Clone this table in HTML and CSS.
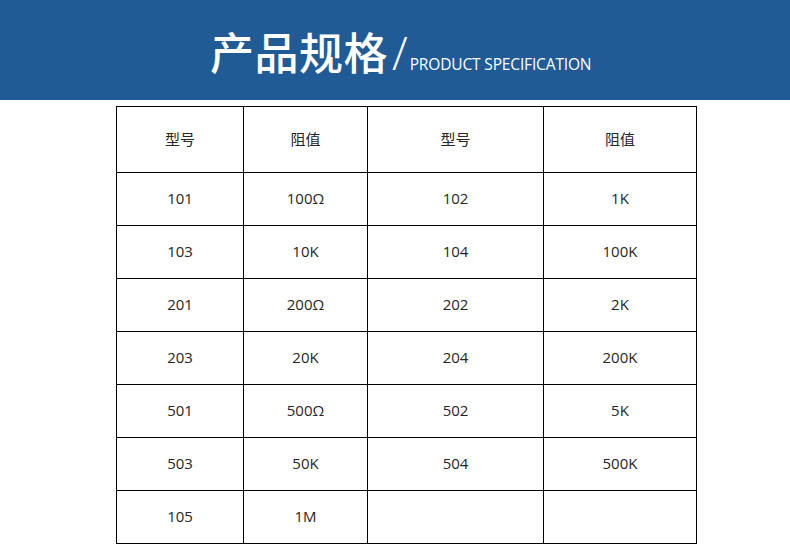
FILE: index.html
```html
<!DOCTYPE html>
<html lang="zh-CN">
<head>
<meta charset="utf-8">
<title>产品规格</title>
<link rel="stylesheet" href="styles.css">
</head>
<body>
<header class="banner">
  <div class="title">
    <span class="title-cn">产品规格</span>
    <span class="title-slash">/</span>
    <span class="title-en">PRODUCT SPECIFICATION</span>
  </div>
</header>
<main class="content">
  <table class="spec">
    <colgroup>
      <col class="c1"><col class="c2"><col class="c3"><col class="c4">
    </colgroup>
    <thead>
      <tr class="head-row"><th>型号</th><th>阻值</th><th>型号</th><th>阻值</th></tr>
    </thead>
    <tbody>
      <tr><td>101</td><td>100Ω</td><td>102</td><td>1K</td></tr>
      <tr><td>103</td><td>10K</td><td>104</td><td>100K</td></tr>
      <tr><td>201</td><td>200Ω</td><td>202</td><td>2K</td></tr>
      <tr><td>203</td><td>20K</td><td>204</td><td>200K</td></tr>
      <tr><td>501</td><td>500Ω</td><td>502</td><td>5K</td></tr>
      <tr><td>503</td><td>50K</td><td>504</td><td>500K</td></tr>
      <tr><td>105</td><td>1M</td><td></td><td></td></tr>
    </tbody>
  </table>
</main>
</body>
</html>
```

FILE: styles.css
```css
html, body {
  margin: 0;
  padding: 0;
  background: #ffffff;
}
body {
  font-family: "Open Sans", "Noto Sans CJK SC", sans-serif;
  color: #222222;
}
.banner {
  height: 100px;
  background: #215b95;
  box-sizing: border-box;
  padding-left: 210px;
  padding-top: 21px;
}
.title {
  display: flex;
  align-items: baseline;
  color: #ffffff;
}
.title-cn {
  font-family: "Noto Sans CJK SC", sans-serif;
  font-size: 44px;
  font-weight: 500;
  line-height: 60px;
  letter-spacing: 0.5px;
}
.title-slash {
  font-family: "Open Sans", sans-serif;
  font-weight: 300;
  font-size: 46px;
  line-height: 60px;
  margin-left: 4px;
  margin-right: 2px;
}
.title-en {
  font-family: "Open Sans", sans-serif;
  font-size: 15.5px;
  font-weight: 500;
  letter-spacing: -0.15px;
}
.content {
  padding: 6px 0 0 116px;
}
.spec {
  border-collapse: collapse;
  table-layout: fixed;
  width: 580px;
}
.spec .c1 { width: 127px; }
.spec .c2 { width: 124px; }
.spec .c3 { width: 176px; }
.spec .c4 { width: 153px; }
.spec th, .spec td {
  border: 1px solid #000000;
  padding: 0 0 2px 0;
  text-align: center;
  vertical-align: middle;
  font-size: 15px;
  font-weight: 400;
  color: #262626;
  font-family: "Open Sans", "Noto Sans CJK SC", sans-serif;
}
.spec th {
  font-family: "Noto Sans CJK SC", sans-serif;
}
.spec tr { height: 53px; }
.spec .head-row { height: 66px; }
```
